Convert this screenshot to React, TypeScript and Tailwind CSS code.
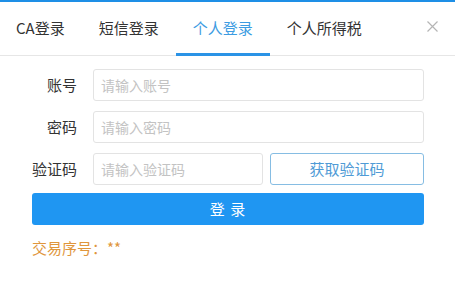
import React from "react";

const font = { fontFamily: '"Noto Sans CJK SC", "Noto Sans", sans-serif' };

function Tab({ label, active }: { label: string; active?: boolean }) {
  return (
    <div
      className={`relative h-full flex items-center px-[17px] pb-[1px] text-[15px] ${
        active ? "text-[#3d9ce2]" : "text-[#333]"
      }`}
    >
      {label}
      {active && (
        <div className="absolute left-0 right-0 bottom-[-1px] h-[3px] bg-[#2a93e6]" />
      )}
    </div>
  );
}

function Field({ label, placeholder }: { label: string; placeholder: string }) {
  return (
    <div className="flex items-center h-[32px] gap-[16px]">
      <div className="w-[45px] text-right text-[15px] text-[#333] whitespace-nowrap">{label}</div>
      <input
        className="flex-1 h-full border border-[#e3e3e3] rounded-[3px] px-[7px] text-[14px] outline-none placeholder:text-[#c3c3c3]"
        placeholder={placeholder}
        style={font}
      />
    </div>
  );
}

export default function App() {
  return (
    <div className="w-[455px] h-[300px] bg-white overflow-hidden" style={font}>
      <div className="h-[2px] bg-[#1e8fe6]" />
      <div className="flex items-stretch h-[54px] border-b border-[#e6e6e6] -ml-px">
        <Tab label="CA登录" />
        <Tab label="短信登录" />
        <Tab label="个人登录" active />
        <Tab label="个人所得税" />
        <div className="ml-auto mr-[17px] flex items-center pb-[4px]">
          <svg width="11" height="11" viewBox="0 0 11 11">
            <path d="M0.5 0.5 L10.5 10.5 M10.5 0.5 L0.5 10.5" stroke="#b5b5b5" strokeWidth="1.2" />
          </svg>
        </div>
      </div>
      <div className="pl-[32px] pr-[31px] pt-[13px] flex flex-col">
        <div className="flex flex-col gap-[10px]">
          <Field label="账号" placeholder="请输入账号" />
          <Field label="密码" placeholder="请输入密码" />
          <div className="flex items-center h-[32px] gap-[16px]">
            <div className="w-[45px] text-right text-[15px] text-[#333] whitespace-nowrap">验证码</div>
            <input
              className="w-[170px] h-full border border-[#e3e3e3] rounded-[3px] px-[7px] text-[14px] outline-none placeholder:text-[#c3c3c3]"
              placeholder="请输入验证码"
              style={font}
            />
            <button
              className="flex-1 h-full border border-[#86bde3] rounded-[3px] text-[15px] text-[#4f9bd6] bg-white ml-[-9px]"
              style={font}
            >
              获取验证码
            </button>
          </div>
        </div>
        <button
          className="mt-[8px] h-[32px] rounded-[3px] bg-[#1f96f2] text-white text-[15px] tracking-[1px]"
          style={font}
        >
          登 录
        </button>
        <div className="mt-[13px] text-[15px] leading-[20px] text-[#e0963c]">交易序号：**</div>
      </div>
    </div>
  );
}
